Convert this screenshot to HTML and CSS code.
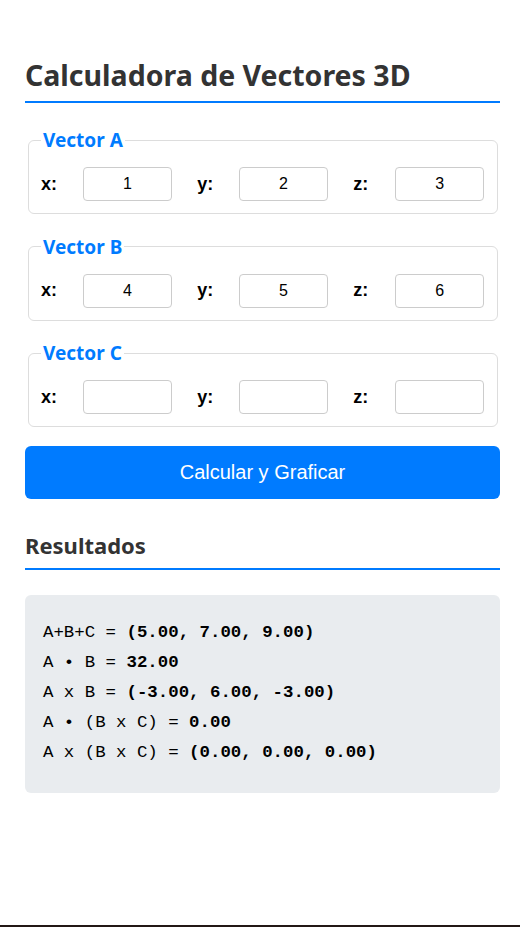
FILE: index.html
```html
<!DOCTYPE html>
<html lang="es">
<head>
<meta charset="utf-8">
<title>Calculadora de Vectores 3D</title>
<link rel="stylesheet" href="styles.css">
</head>
<body>
<main class="container">
  <h1 class="title">Calculadora de Vectores 3D</h1>

  <fieldset class="vector">
    <legend class="vector-legend">Vector A</legend>
    <div class="coords">
      <div class="coord"><label class="coord-label">x:</label><input class="coord-input" type="text" value="1"></div>
      <div class="coord"><label class="coord-label">y:</label><input class="coord-input" type="text" value="2"></div>
      <div class="coord"><label class="coord-label">z:</label><input class="coord-input" type="text" value="3"></div>
    </div>
  </fieldset>

  <fieldset class="vector">
    <legend class="vector-legend">Vector B</legend>
    <div class="coords">
      <div class="coord"><label class="coord-label">x:</label><input class="coord-input" type="text" value="4"></div>
      <div class="coord"><label class="coord-label">y:</label><input class="coord-input" type="text" value="5"></div>
      <div class="coord"><label class="coord-label">z:</label><input class="coord-input" type="text" value="6"></div>
    </div>
  </fieldset>

  <fieldset class="vector">
    <legend class="vector-legend">Vector C</legend>
    <div class="coords">
      <div class="coord"><label class="coord-label">x:</label><input class="coord-input" type="text" value=""></div>
      <div class="coord"><label class="coord-label">y:</label><input class="coord-input" type="text" value=""></div>
      <div class="coord"><label class="coord-label">z:</label><input class="coord-input" type="text" value=""></div>
    </div>
  </fieldset>

  <button class="calc-btn" type="button">Calcular y Graficar</button>

  <h2 class="subtitle">Resultados</h2>
  <div class="results">
    <div class="result-line">A+B+C = <b>(5.00, 7.00, 9.00)</b></div>
    <div class="result-line">A • B = <b>32.00</b></div>
    <div class="result-line">A x B = <b>(-3.00, 6.00, -3.00)</b></div>
    <div class="result-line">A • (B x C) = <b>0.00</b></div>
    <div class="result-line">A x (B x C) = <b>(0.00, 0.00, 0.00)</b></div>
  </div>
</main>
</body>
</html>
```

FILE: styles.css
```css
html, body {
  margin: 0;
  padding: 0;
}

body {
  min-height: 100vh;
  box-sizing: border-box;
  border-bottom: 2px solid #231815;
  background: #ffffff;
  font-family: "Noto Sans", "Open Sans", sans-serif;
  font-size: 16px;
  color: #333333;
}

.container {
  padding: 57px 20px 0 25px;
}

.title {
  margin: 0;
  font-size: 28.5px;
  line-height: 36px;
  font-weight: 700;
  color: #333333;
  padding-bottom: 8px;
  border-bottom: 2px solid #007bff;
}

.vector {
  margin: 25px 2px 0 3px;
  padding: 3px 13px 12px 12px;
  border: 1px solid #dddddd;
  border-radius: 6px;
}

.vector + .vector {
  margin-top: 20.5px;
}

.vector-legend {
  padding: 0 2px;
  font-size: 19px;
  line-height: 24px;
  font-weight: 700;
  color: #007bff;
}

.coords {
  display: grid;
  grid-template-columns: repeat(3, 1fr);
  column-gap: 25.5px;
  padding-top: 12px;
}

.coord {
  display: flex;
  align-items: center;
}

.coord-label {
  flex: 0 0 42px;
  font-family: "Liberation Sans", Arial, sans-serif;
  font-size: 18px;
  font-weight: 700;
  color: #000000;
}

.coord-input {
  flex: 1 1 auto;
  min-width: 0;
  width: 0;
  height: 34px;
  box-sizing: border-box;
  margin: 0;
  padding: 0 6px;
  border: 1px solid #cccccc;
  border-radius: 4px;
  background: #ffffff;
  font-family: "Liberation Sans", Arial, sans-serif;
  font-size: 16px;
  color: #000000;
  text-align: center;
}

.calc-btn {
  display: block;
  width: 100%;
  height: 53px;
  margin: 19px 0 0 0;
  border: none;
  border-radius: 6px;
  background: #007bff;
  color: #ffffff;
  font-family: "Liberation Sans", Arial, sans-serif;
  font-size: 20px;
}

.subtitle {
  margin: 31px 0 0 0;
  font-size: 22px;
  line-height: 30px;
  font-weight: 700;
  color: #333333;
  padding-bottom: 8px;
  border-bottom: 2px solid #007bff;
}

.results {
  margin-top: 25px;
  padding: 23px 18px 25px 18px;
  background: #e9ecef;
  border-radius: 6px;
  font-family: "Liberation Mono", "Courier New", monospace;
  font-size: 17.4px;
  color: #000000;
}

.result-line {
  line-height: 30px;
  white-space: pre;
}

.result-line b {
  font-weight: 700;
}
```
